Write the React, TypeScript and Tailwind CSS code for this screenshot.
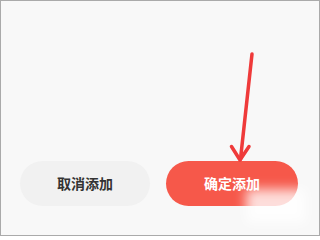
export default function App() {
  return (
    <div
      className="relative w-[320px] h-[236px] overflow-hidden border border-[#aaaaaa] bg-[#f8f8f8] flex flex-col justify-end"
      style={{ fontFamily: '"Noto Sans CJK SC", "Noto Sans", sans-serif' }}
    >
      {/* buttons */}
      <div className="flex items-center gap-[16px] pl-[19px] pr-[21px] pb-[29px]">
        <button className="w-[130px] h-[45px] rounded-full bg-[#f1f1f1] text-[#333333] text-[14px] font-bold tracking-[0px]">
          取消添加
        </button>
        <button className="w-[132px] h-[45px] rounded-full bg-[#f6584a] text-white text-[14px] font-bold">
          确定添加
        </button>
      </div>

      {/* annotation arrow */}
      <svg
        className="absolute left-0 top-0 pointer-events-none"
        width="320"
        height="236"
        viewBox="0 0 320 236"
      >
        <g stroke="#ef3a3a" strokeWidth="3.5" strokeLinecap="round" strokeLinejoin="round" fill="none">
          <line x1="251" y1="53" x2="239.5" y2="158" />
          <polyline points="230.5,145.5 239,159 248,145.5" />
        </g>
      </svg>

      {/* watermark haze */}
      <div className="absolute left-[245px] top-[188px] w-[60px] h-[34px] bg-white/80 blur-[6px] pointer-events-none" />
    </div>
  );
}
